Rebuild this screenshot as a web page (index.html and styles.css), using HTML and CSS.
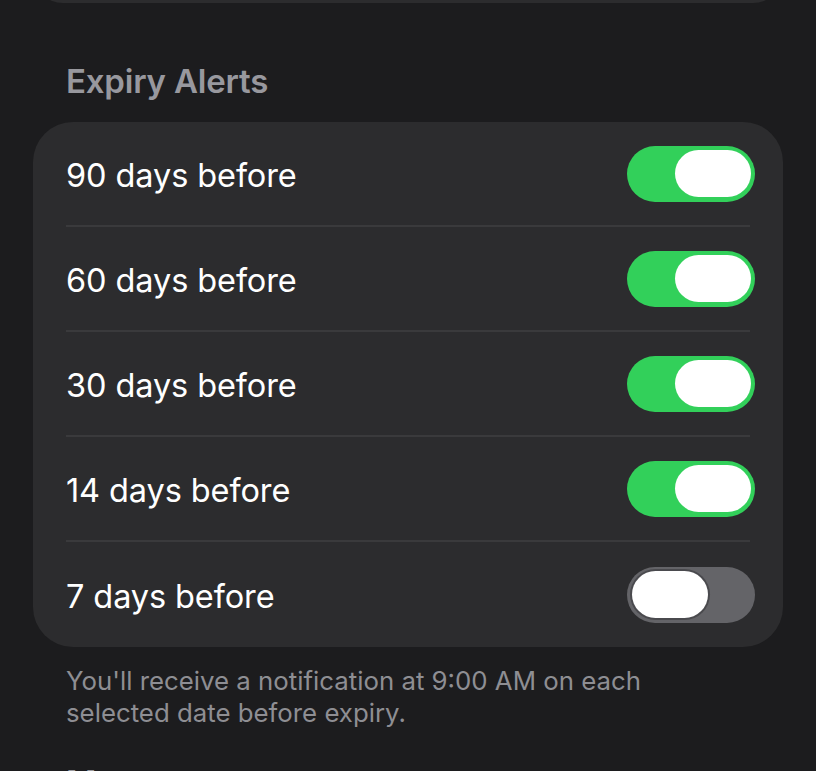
FILE: index.html
```html
<!DOCTYPE html>
<html>
<head>
<meta charset="utf-8">
<link rel="stylesheet" href="styles.css">
</head>
<body>
<div class="page">
  <div class="prev-card"></div>
  <h2 class="section-title">Expiry Alerts</h2>
  <div class="card">
    <div class="row">
      <span class="label">90 days before</span>
      <span class="toggle on"><span class="knob"></span></span>
    </div>
    <div class="row">
      <span class="label">60 days before</span>
      <span class="toggle on"><span class="knob"></span></span>
    </div>
    <div class="row">
      <span class="label">30 days before</span>
      <span class="toggle on"><span class="knob"></span></span>
    </div>
    <div class="row">
      <span class="label">14 days before</span>
      <span class="toggle on"><span class="knob"></span></span>
    </div>
    <div class="row">
      <span class="label">7 days before</span>
      <span class="toggle off"><span class="knob"></span></span>
    </div>
  </div>
  <p class="footnote">You'll receive a notification at 9:00 AM on each selected date before expiry.</p>
  <h2 class="section-title next">Manage</h2>
</div>
</body>
</html>
```
FILE: styles.css
```css
html, body {
  margin: 0;
  padding: 0;
  background: #1c1c1e;
}
body {
  font-family: Inter, "Noto Sans", sans-serif;
  overflow: hidden;
  height: 771px;
}
.page {
  padding: 0 33px;
}
.prev-card {
  height: 60px;
  margin-top: -57px;
  background: #2c2c2e;
  border-radius: 40px;
}
.section-title {
  margin: 0;
  box-sizing: border-box;
  padding: 58px 0 0 33px;
  height: 119px;
  font-size: 33px;
  font-weight: 600;
  color: #98989e;
  line-height: 40px;
  letter-spacing: -0.2px;
}
.card {
  background: #2c2c2e;
  border-radius: 40px;
  padding-left: 33px;
}
.row {
  height: 105px;
  display: flex;
  align-items: center;
  justify-content: space-between;
  box-sizing: border-box;
  border-bottom: 2px solid #3a3a3c;
  margin-right: 33px;
}
.row:last-child {
  border-bottom: none;
}
.label {
  font-size: 32.5px;
  color: #ffffff;
  letter-spacing: -0.1px;
  margin-top: 3px;
}
.toggle {
  width: 128px;
  height: 56px;
  border-radius: 28px;
  display: flex;
  align-items: center;
  padding: 0 4px;
  box-sizing: border-box;
  margin-right: -5px;
}
.toggle.on {
  background: #32d05a;
  justify-content: flex-end;
}
.toggle.off {
  background: #646468;
  justify-content: flex-start;
}
.knob {
  width: 76px;
  height: 47px;
  border-radius: 24px;
  background: #ffffff;
}
.toggle.off .knob {
  box-shadow: 0 0 0 2px #4a4a4e;
  margin-left: 1px;
}
.footnote {
  margin: 0;
  padding: 18px 33px 0 33px;
  font-size: 25.8px;
  line-height: 32px;
  color: #8e8e93;
  width: 620px;
}
.section-title.next {
  padding-top: 33px;
  height: auto;
}
```
